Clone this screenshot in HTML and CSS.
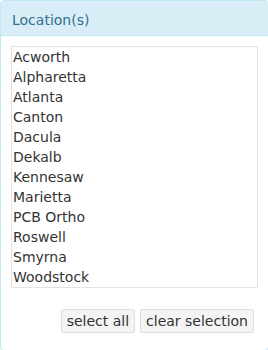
FILE: index.html
```html
<!DOCTYPE html>
<html>
<head>
<meta charset="utf-8">
<link rel="stylesheet" href="styles.css">
</head>
<body>
<div class="panel">
  <div class="panel-heading">Location(s)</div>
  <div class="panel-body">
    <div class="listbox" role="listbox" aria-multiselectable="true">
      <div class="option" role="option">Acworth</div>
      <div class="option" role="option">Alpharetta</div>
      <div class="option" role="option">Atlanta</div>
      <div class="option" role="option">Canton</div>
      <div class="option" role="option">Dacula</div>
      <div class="option" role="option">Dekalb</div>
      <div class="option" role="option">Kennesaw</div>
      <div class="option" role="option">Marietta</div>
      <div class="option" role="option">PCB Ortho</div>
      <div class="option" role="option">Roswell</div>
      <div class="option" role="option">Smyrna</div>
      <div class="option" role="option">Woodstock</div>
    </div>
    <div class="actions">
      <button class="btn" type="button">select all</button>
      <button class="btn" type="button">clear selection</button>
    </div>
  </div>
</div>
</body>
</html>
```
FILE: styles.css
```css
html, body {
  margin: 0;
  padding: 0;
  background: #fff;
}
body {
  font-family: "DejaVu Sans", Verdana, sans-serif;
  font-size: 14px;
  color: #333;
}
.panel {
  box-sizing: border-box;
  width: 269px;
  height: 351px;
  border: 1px solid #bce8f1;
  border-radius: 4px;
  background: #fff;
}
.panel-heading {
  height: 20px;
  padding: 9px 11px 5px;
  line-height: 20px;
  background: #d9edf7;
  color: #31708f;
  border-bottom: 1px solid #bce8f1;
  border-radius: 3px 3px 0 0;
}
.panel-body {
  padding: 10px;
}
.listbox {
  border: 1px solid #e3e3e3;
  padding: 0 0 0 1px;
}
.option {
  line-height: 20px;
  height: 20px;
  color: #333;
  white-space: nowrap;
}
.actions {
  display: flex;
  justify-content: flex-end;
  gap: 5px;
  margin-top: 21px;
  padding-right: 4px;
}
.btn {
  font-family: inherit;
  font-size: 14px;
  color: #333;
  background: #f4f4f4;
  border: 1px solid #dedede;
  border-radius: 2px;
  height: 24px;
  line-height: 20px;
  padding: 0 5px;
  margin: 0;
}
```
